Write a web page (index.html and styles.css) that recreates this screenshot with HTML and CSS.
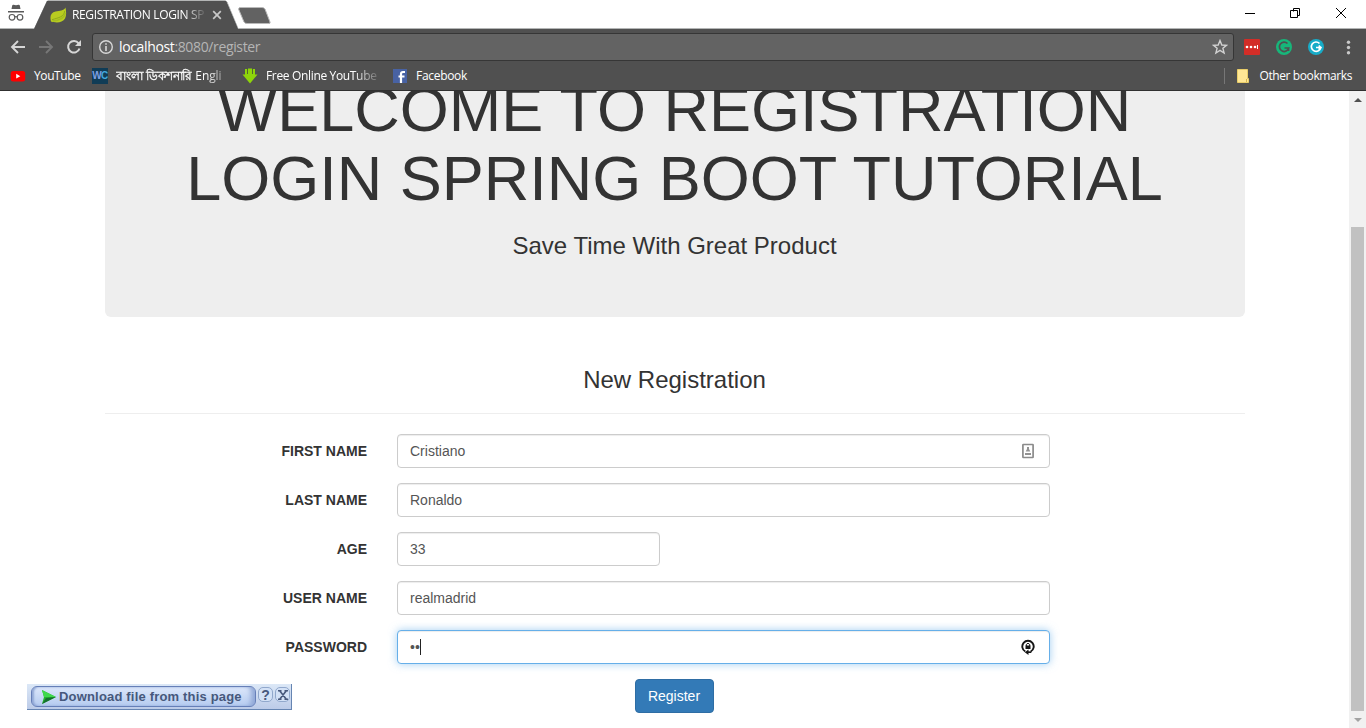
FILE: index.html
```html
<!DOCTYPE html>
<html lang="en">
<head>
<meta charset="utf-8">
<title>REGISTRATION LOGIN SPRING BOOT</title>
<link rel="stylesheet" href="styles.css">
</head>
<body>
<header class="browser">
  <div class="titlebar">
    <svg class="tab-shapes" width="290" height="29" viewBox="0 0 290 29">
      <path d="M0 28.5H34.500L47 1.500Q47.500 .5 49 .5H224Q226 .5 227 2L238 28.500H290" fill="#505050" stroke="#b3b5b5"/>
      <path d="M34 29L47 1H226L238 29Z" fill="#505050"/>
      <path d="M239.500 7.500H262Q264 7.500 265 9L270 22Q270.500 23.500 269 23.500H247Q245 23.500 244 22L238.500 9Z" fill="#626262" stroke="#b9b9b9"/>
    </svg>
    <svg class="incognito" width="18" height="18" viewBox="0 0 18 18">
      <path d="M5.200 1.500Q5.500.5 6.500.7L9 1.300L11.500.7Q12.500.5 12.800 1.500L13.500 5H4.500ZM1 7H17V8.500H1Z" fill="#5a5a5a"/>
      <g fill="none" stroke="#5a5a5a" stroke-width="1.200"><circle cx="5" cy="13.300" r="2.800"/><circle cx="13" cy="13.300" r="2.800"/><path d="M7.800 13Q9 12.200 10.200 13"/></g>
    </svg>
    <svg class="leaf" width="17" height="16" viewBox="0 0 17 16">
      <path d="M15.500.5C17 8 16 12.500 11.500 14.500C8.500 16 4 15.500 1 14.500C-.5 9 1 5.500 5.500 4.500C10 3.700 13.500 4 15.500.5Z" fill="#b9cc20"/>
      <path d="M14.700 4C14 10 9 10.500 2 12.700" fill="none" stroke="#8faa1c" stroke-width="1"/>
      <path d="M2.500 14C9 13.700 14 12 15.300 6" fill="none" stroke="#a4bd20" stroke-width="1.500"/>
    </svg>
    <span class="tab-title">REGISTRATION LOGIN SPRING</span>
    <svg class="tab-close" width="10" height="10" viewBox="0 0 10 10"><path d="M1.200 1.200L8.800 8.800M8.800 1.200L1.200 8.800" stroke="#c8c8c8" stroke-width="1.700"/></svg>
    <svg class="window-controls" width="104" height="14" viewBox="0 0 104 14">
      <g fill="none" stroke="#000"><path d="M0 6.500H10M48.500 4.500V1.500H54.500V8.500H52.500M45.500 3.500H52.500V10.500H45.500Z"/><path d="M91 1L101 11M101 1L91 11"/></g>
    </svg>
  </div>
  <div class="toolbar">
    <svg class="nav" width="92" height="32" viewBox="0 0 92 32" fill="none">
      <path d="M25 17H12M18 11L12 17L18 23" stroke="#d6d6d6" stroke-width="1.900"/>
      <path d="M39 17H52M46 11L52 17L46 23" stroke="#777" stroke-width="1.900"/>
      <path d="M78.600 13.300A5.800 5.800 0 1 0 79.500 18.500" stroke="#d6d6d6" stroke-width="2"/>
      <path d="M81 10V16H75Z" fill="#d6d6d6"/>
    </svg>
    <div class="address">
      <svg width="16" height="16" viewBox="0 0 16 16"><circle cx="8" cy="8" r="6.300" fill="none" stroke="#d8d8d8" stroke-width="1.400"/><path d="M7.200 4.200H8.800V5.800H7.200ZM7.200 7H8.800V12H7.200Z" fill="#d8d8d8"/></svg>
      <span class="url"><b>localhost</b>:8080/register</span>
      <svg class="star" width="16" height="16" viewBox="0 0 16 16"><path d="M8 1.500L9.800 6L14.500 6.300L10.900 9.300L12.100 14L8 11.400L3.900 14L5.100 9.300L1.500 6.300L6.200 6Z" fill="none" stroke="#d2d2d2" stroke-width="1.400"/></svg>
    </div>
    <svg class="extensions" width="132" height="32" viewBox="0 0 132 32">
      <rect x="10" y="10" width="16" height="16" rx="1" fill="#d32d27"/>
      <path d="M23.500 16V20" stroke="#fff"/><circle cx="13" cy="18" r="1.300" fill="#fff"/><circle cx="17" cy="18" r="1.300" fill="#fff"/><circle cx="21" cy="18" r="1.300" fill="#fff"/>
      <circle cx="50" cy="18" r="8" fill="#17b67a"/><path d="M53.500 14.500A4.700 4.700 0 1 0 54.700 19H50.500M54.500 18.500V22" fill="none" stroke="#505050" stroke-width="1.700"/>
      <circle cx="82" cy="18" r="8" fill="#17acc8"/><path d="M85.500 14.500A4.700 4.700 0 1 0 86.700 18.500H82M84.800 16.500L86.900 18.600L84.800 20.500" fill="none" stroke="#fff" stroke-width="1.700"/>
      <g fill="#c9c9c9"><circle cx="114.500" cy="13.300" r="1.700"/><circle cx="114.500" cy="18.500" r="1.700"/><circle cx="114.500" cy="23.700" r="1.700"/></g>
    </svg>
  </div>
  <nav class="bookmarks">
    <div class="bookmark youtube"><svg width="16" height="16" viewBox="0 0 16 16"><rect x=".7" y="3" width="14.500" height="10.500" rx="2.500" fill="red"/><path d="M6.200 5.800L10.300 8.200L6.200 10.600Z" fill="#fff"/></svg><span>YouTube</span></div>
    <div class="bookmark dictionary"><span class="wc">W<em>C</em></span><span class="fade"><i>বাংলা ডিকশনারি</i> Engli</span></div>
    <div class="bookmark downloader"><svg width="16" height="16" viewBox="0 0 16 16"><path d="M3 1H5V6H6V.5H10V6H11V1H13V6.500H15.500L8 15.500L.5 6.500H3Z" fill="#8ed40a"/><path d="M5.500 1V6M10.500 1V6" stroke="#53682f"/></svg><span class="fade">Free Online YouTube</span></div>
    <div class="bookmark facebook"><svg width="14" height="14" viewBox="0 0 14 14"><path d="M0 0H14V14H0Z" fill="#4862a3"/><path d="M8 14V5Q8 3 10 3H12M5.500 7.500H11.500" fill="none" stroke="#fff" stroke-width="2.200"/></svg><span>Facebook</span></div>
    <div class="bookmark other"><svg width="13" height="14" viewBox="0 0 13 14"><path d="M.5.5H10.500V9.500H11.500V13.500H.5Z" fill="#ffe795" stroke="#e9cd69"/><path d="M9.500 13V10" stroke="#d2b54f"/></svg><span>Other bookmarks</span></div>
  </nav>
</header>
<div class="viewport">
  <main class="container">
    <section class="jumbotron">
      <h1>WELCOME TO REGISTRATION LOGIN SPRING BOOT TUTORIAL</h1>
      <h3>Save Time With Great Product</h3>
    </section>
    <h3 class="form-title">New Registration</h3>
    <hr>
    <form class="form">
      <label for="first">FIRST NAME</label>
      <div class="field"><input id="first" type="text" value="Cristiano">
        <svg class="field-icon" width="12" height="16" viewBox="0 0 12 16"><rect x=".9" y="1.500" width="10.200" height="13" rx=".5" fill="#fff" stroke="#8b8b8b" stroke-width="1.700"/><path d="M5 4H7V6L8.300 8.500H3.700L5 6ZM3 10H9V12H3Z" fill="#929292"/></svg></div>
      <label for="last">LAST NAME</label>
      <div class="field"><input id="last" type="text" value="Ronaldo"></div>
      <label for="age">AGE</label>
      <div class="field short"><input id="age" type="text" value="33"></div>
      <label for="user">USER NAME</label>
      <div class="field"><input id="user" type="text" value="realmadrid"></div>
      <label>PASSWORD</label>
      <div class="field"><div class="control active"><span class="dots">••</span><span class="caret"></span></div>
        <svg class="field-icon lock" width="14" height="18" viewBox="0 0 14 18"><path d="M4.300 13.500A5.700 5.700 0 1 1 9.700 13.500" fill="none" stroke="#151515" stroke-width="1.900"/><path d="M5.300 8V6.500Q7 3.800 8.700 6.500V8" fill="none" stroke="#151515" stroke-width="1"/><path d="M4.500 7.500H9.500V11H4.500Z" fill="#151515"/><path d="M7.500 11.500V17L3.800 14.200Z" fill="#151515"/><path d="M7 13.300H10.300V15H7Z" fill="#151515"/></svg></div>
    </form>
    <div class="actions"><button type="button">Register</button></div>
  </main>
  <aside class="scrollbar"><i class="up"></i><div class="thumb"></div><i class="down"></i></aside>
</div>
<div class="download-bar">
  <div class="download-button"><svg width="14" height="14" viewBox="0 0 14 14"><path d="M0 0L14 7L0 14L2 7Z" fill="#23b52f"/><path d="M0 0L14 7H2Z" fill="#3fd94c"/><path d="M14 7L0 14L4 8Z" fill="#16702f"/></svg><span>Download file from this page</span></div>
  <b class="mini">?</b><b class="mini"><svg width="10" height="10" viewBox="0 0 10 10"><path d="M1.500 .5L8.500 9.500M8.500 .5L1.500 9.500M0 .8H3.500M6.500 .8H10M0 9.200H3.500M6.500 9.200H10" fill="none" stroke="#48597d" stroke-width="1.600"/></svg></b>
</div>
</body>
</html>
```
FILE: styles.css
```css
* { box-sizing: border-box; }
body { margin: 0; width: 1366px; height: 728px; overflow: hidden; background: #fff; color: #333; font: 14px/20px "Liberation Sans", Arial, sans-serif; }
svg { display: block; flex: none; }
.browser { height: 91px; background: #505050; border-bottom: 1px solid #303030; font: 12px/16px "Open Sans", "Noto Sans", sans-serif; color: #fff; }
.titlebar { position: relative; height: 29px; background: #fff; border-bottom: 1px solid #b3b5b5; }
.tab-shapes { position: absolute; left: 0; top: 0; }
.incognito { position: absolute; left: 7px; top: 4px; }
.leaf { position: absolute; left: 50px; top: 7px; }
.tab-title { position: absolute; left: 72px; top: 7px; width: 133px; overflow: hidden; white-space: nowrap; letter-spacing: -.35px; -webkit-mask-image: linear-gradient(90deg, #000 112px, transparent 135px); mask-image: linear-gradient(90deg, #000 112px, transparent 135px); }
.tab-close { position: absolute; left: 212px; top: 10px; }
.window-controls { position: absolute; left: 1245px; top: 7px; }
.toolbar { display: flex; height: 32px; }
.nav { width: 92px; margin-top: 1px; }
.address { display: flex; align-items: center; width: 1142px; height: 28px; margin-top: 4px; padding: 0 5px 0 5px; border: 1px solid #363636; border-radius: 3px; background: #636363; }
.url { margin-left: 5px; font-size: 14px; line-height: 18px; color: #b5b5b5; letter-spacing: -.36px; white-space: nowrap; }
.url b { color: #fff; font-weight: normal; }
.star { margin-left: auto; }
.bookmarks { display: flex; align-items: center; height: 29px; padding: 0 14px 0 10px; white-space: nowrap; }
.bookmark { display: flex; align-items: center; gap: 8px; letter-spacing: -.4px; }
.bookmark span { white-space: nowrap; }
.youtube { width: 82px; }
.dictionary { width: 150px; }
.downloader { width: 151px; }
.bookmark .wc { width: 16px; height: 16px; flex: none; background: #103c56; color: #7f9fe0; font: bold 10px/16px "Liberation Sans", sans-serif; text-align: center; letter-spacing: -.7px; }
.wc em { font-style: normal; color: #42a8df; }
.fade { overflow: hidden; -webkit-mask-image: linear-gradient(90deg, #000 78%, transparent 104%); mask-image: linear-gradient(90deg, #000 78%, transparent 104%); }
.dictionary .fade { width: 114px; letter-spacing: -.1px; }
.dictionary i { font-style: normal; -webkit-text-stroke: .3px #fff; }
.downloader .fade { width: 112px; letter-spacing: -.34px; }
.facebook { gap: 9px; letter-spacing: -.3px; }
.other { margin-left: auto; padding-left: 12px; border-left: 1px solid #777; gap: 9px; }
.viewport { display: flex; height: 637px; overflow: hidden; }
.container { width: 1140px; margin: 0 104px 0 105px; }
.jumbotron { height: 242px; margin-top: -16px; padding: 0 61px 0 60px; background: #eee; border-radius: 6px; text-align: center; }
h1 { margin: 0; font-size: 63px; line-height: 69px; }
h3 { margin: 20px 0 0; font-size: 24px; line-height: 26.400px; }
h1, h3 { font-weight: normal; }
.form-title { margin-top: 50px; padding-right: 1px; text-align: center; }
hr { height: 1px; margin: 20px 0; border: 0; background: #eee; }
.form { display: grid; grid-template-columns: 262px 653px; column-gap: 30px; row-gap: 15px; }
label { padding-top: 7px; text-align: right; font-weight: bold; }
.field { position: relative; height: 34px; }
.short { width: 263px; }
input, .control { display: flex; align-items: center; width: 100%; height: 34px; padding: 6px 12px; border: 1px solid #ccc; border-radius: 4px; background: #fff; color: #555; font: 14px/20px "Liberation Sans", Arial, sans-serif; box-shadow: inset 0 1px 1px rgba(0,0,0,.075); outline: 0; }
.active { border-color: #66afe9; box-shadow: inset 0 1px 1px rgba(0,0,0,.075), 0 0 8px rgba(102,175,233,.6); }
.dots { letter-spacing: .1px; }
.caret { width: 1px; height: 16px; background: #222; }
.field-icon { position: absolute; right: 16px; top: 9px; }
.lock { right: 15px; top: 8px; }
.actions { display: flex; justify-content: center; margin-top: 15px; padding-right: 2px; }
button { width: 79px; height: 34px; border: 1px solid #2e6da4; border-radius: 4px; background: #337ab7; color: #fff; padding: 0; font: 14px/20px "Liberation Sans", Arial, sans-serif; }
.scrollbar { display: flex; flex-direction: column; align-items: center; width: 17px; background: #f1f1f1; padding: 7px 0 6px; }
.scrollbar i { border-left: 4px solid transparent; border-right: 4px solid transparent; }
.up { border-bottom: 4px solid #505050; }
.down { border-top: 4px solid #a3a3a3; margin-top: auto; }
.thumb { width: 13px; height: 484px; margin-top: 125px; background: #c1c1c1; }
.download-bar { position: absolute; left: 27px; top: 684px; display: flex; align-items: center; gap: 2px; width: 265px; height: 26px; padding: 0 1px 2px 4px; border-right: 1px solid #6685b2; border-bottom: 1px solid #6685b2; background: linear-gradient(#dce8f7, #bccbe8); }
.download-button { display: flex; align-items: center; gap: 3px; width: 225px; flex: none; height: 21px; margin-top: 2px; padding-left: 10px; border: 1px solid #667fb8; border-radius: 6px; box-shadow: inset 2px 0 2px #91a8d6, inset -7px 0 5px -3px #91a8d6; background: linear-gradient(#dce7fa, #b5cbf0); color: #46587c; font: bold 13px/18px "Liberation Sans", Arial, sans-serif; letter-spacing: .18px; white-space: nowrap; }
.mini { display: flex; align-items: center; justify-content: center; width: 15px; height: 15px; margin-top: -2px; border: 1px solid #91a8cc; border-radius: 5px; background: #d3e1f6; color: #48597d; font: bold 14px/14px "Liberation Sans", sans-serif; }
```
